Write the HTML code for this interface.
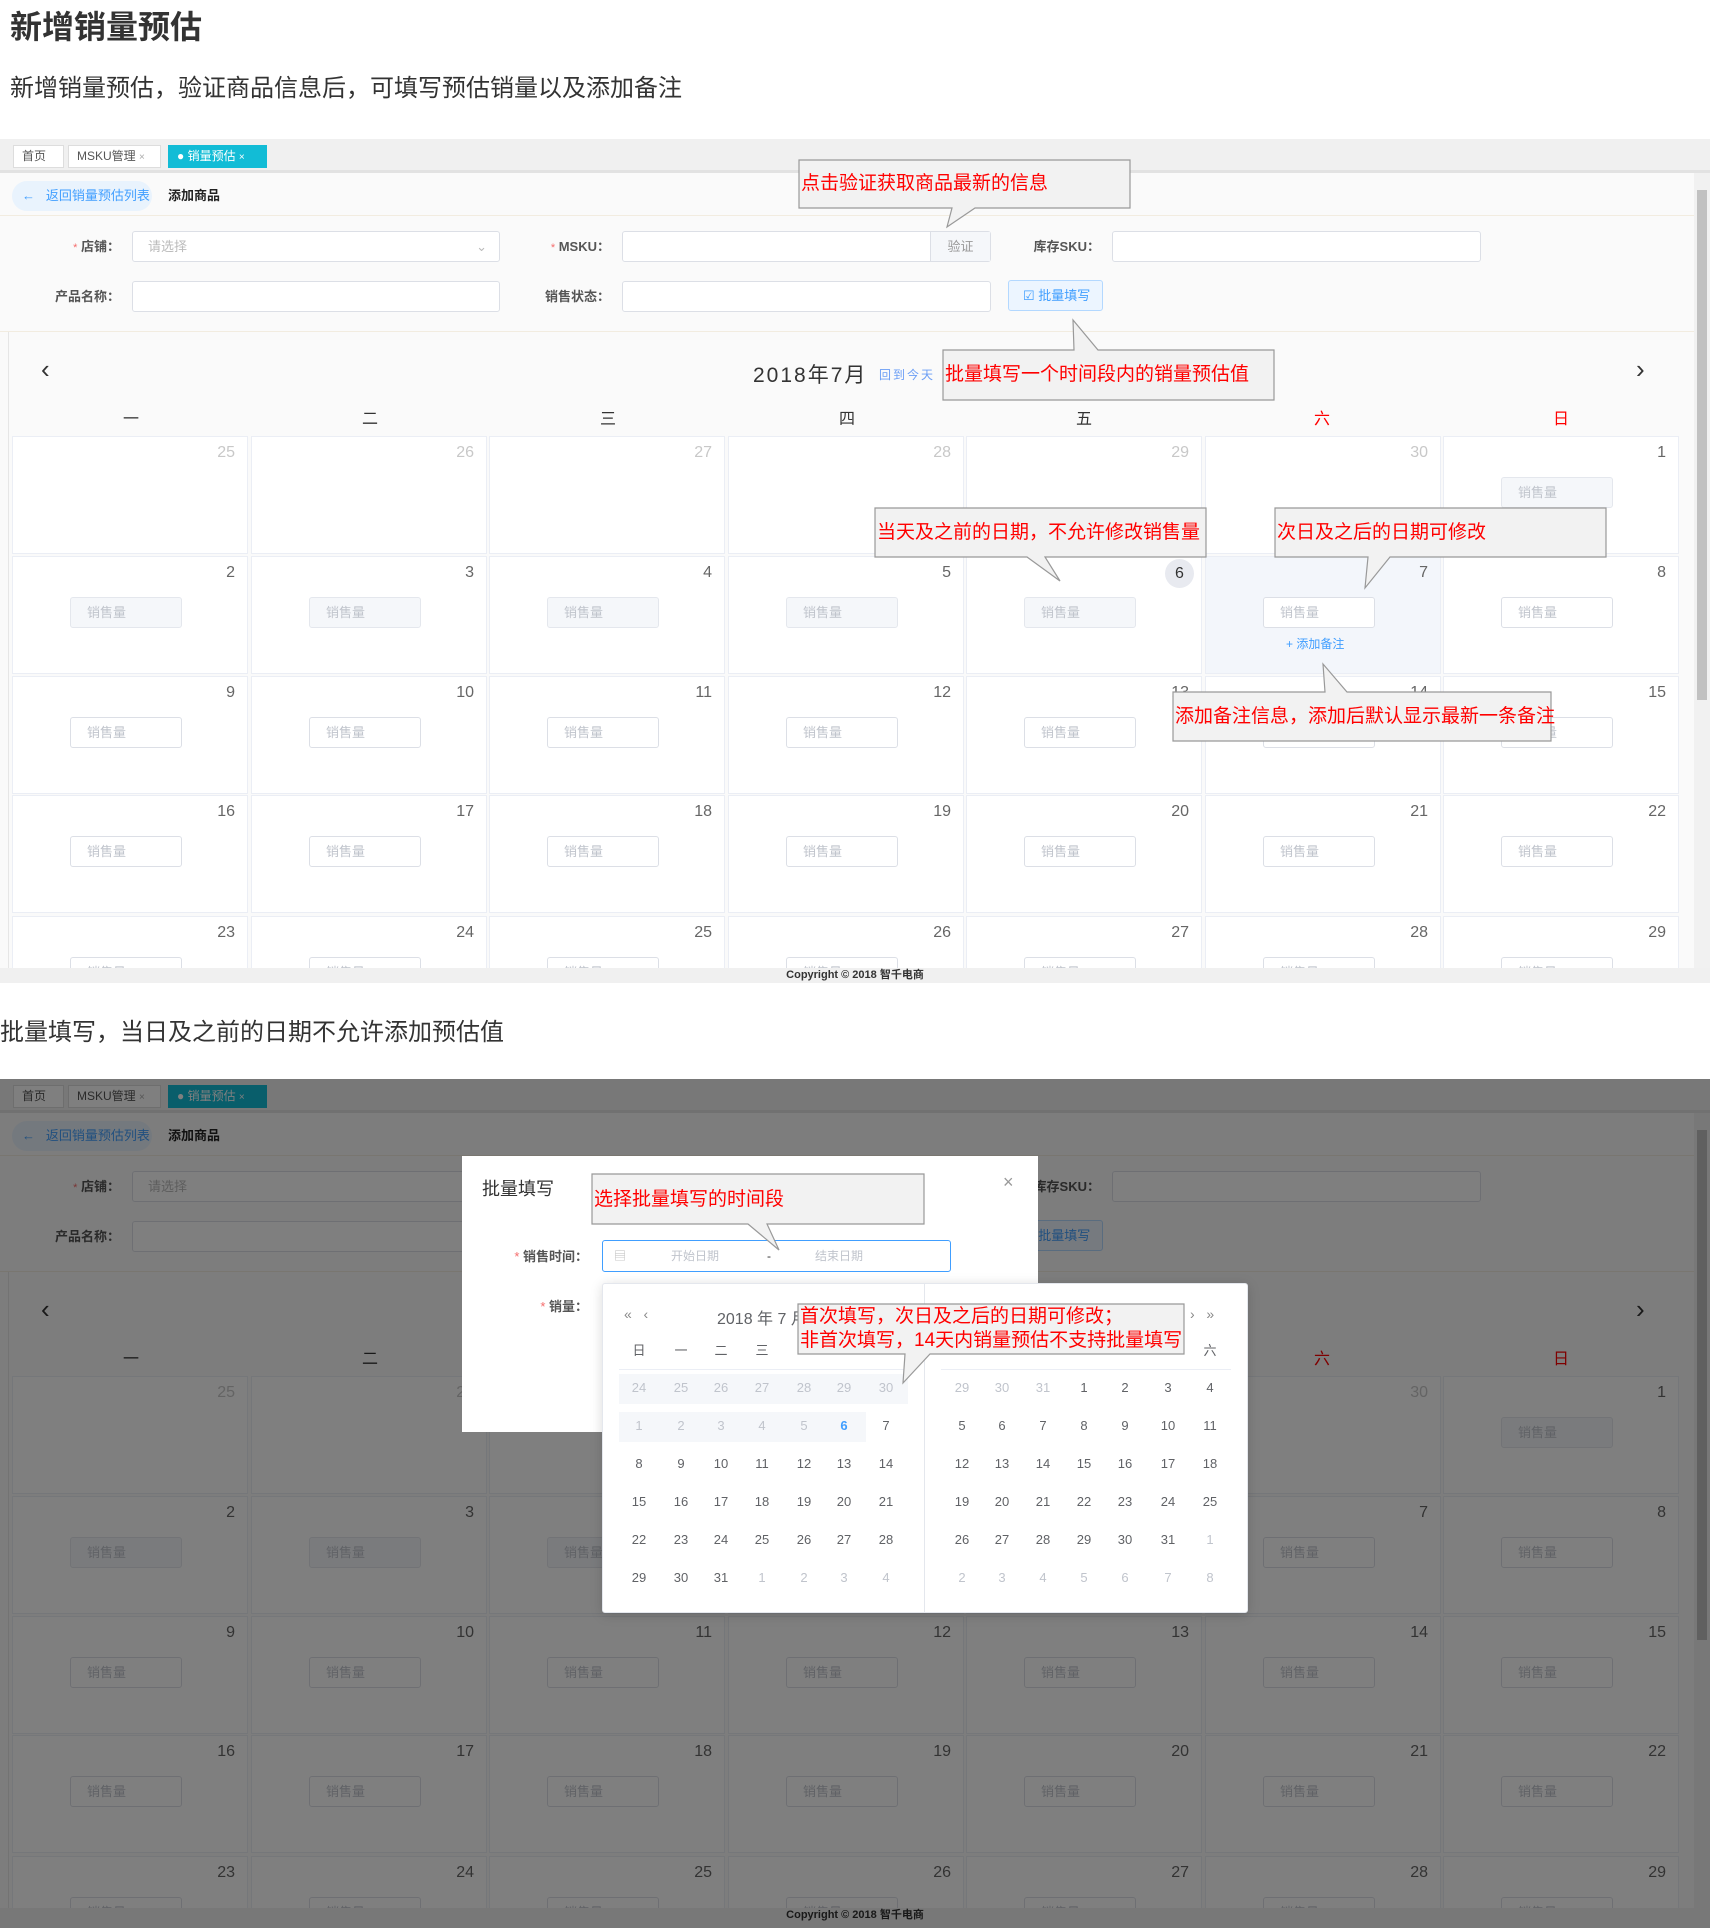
<!DOCTYPE html>
<html><head><meta charset="utf-8"><style>
*{margin:0;padding:0;box-sizing:border-box}
body{width:1710px;height:1928px;position:relative;background:#fff;font-family:"Liberation Sans","Noto Sans CJK SC",sans-serif;overflow:hidden}
.a{position:absolute}
.app{position:absolute;left:0;width:1710px;overflow:hidden;background:#fafafa}
.tabs{position:absolute;left:0;top:0;width:1710px;height:34px;background:#f0f0f0;border-bottom:3px solid #e2e2e2}
.tab{position:absolute;top:6px;height:23px;border:1px solid #ddd;background:#fff;font-size:12px;color:#555;line-height:21px;padding-left:8px}
.bc{position:absolute;top:42px;height:30px;left:12px;width:140px;background:#e9f3fd;border-radius:15px;color:#409eff;font-size:13px;line-height:30px;padding-left:10px}
.form{position:absolute;top:76px;left:0;width:1694px;height:117px;background:#fafafa;border-top:1px solid #f2ece0;border-bottom:1px solid #f2ece0}
.lb{position:absolute;font-size:13px;font-weight:bold;color:#555;text-align:right;width:120px;line-height:31px}
.lb s{color:#f56c6c;text-decoration:none;font-weight:normal;font-size:11px}
.ip{position:absolute;height:31px;background:#fff;border:1px solid #dcdfe6;border-radius:3px;font-size:13px;color:#bbb;line-height:29px;padding-left:15px}
.cal{position:absolute;top:193px;left:8px;width:1678px;height:636px;background:#fafafa;border-left:1px solid #e6e6e6}
.c{position:absolute;width:236px;height:118px;background:#fff;border:1px solid #ebeef5}
.c b{position:absolute;right:12px;top:7px;font-weight:normal;font-size:16px;color:#666}
.c b.g{color:#c8c8c8}
.in{position:absolute;left:57px;top:40px;width:112px;height:31px;border:1px solid #dcdfe6;border-radius:3px;background:#fff;font-style:normal;font-size:13px;color:#c0c4cc;line-height:29px;padding-left:16px}
.in.d{background:#f5f7fa;border-color:#e4e7ed}
.wd{position:absolute;top:73px;font-size:16px;color:#333;width:40px;text-align:center;margin-left:-20px}
.foot{position:absolute;left:0;top:829px;width:1710px;height:15px;background:#f0f0f0;font-size:11px;font-weight:bold;color:#333;text-align:center;line-height:15px}
.sb{position:absolute;left:1694px;top:34px;width:16px;height:795px;background:#f1f1f1}
.sb i{position:absolute;left:3px;top:17px;width:10px;height:510px;background:#c1c1c1}
.ct{position:absolute;color:#f00;font-size:19px;line-height:24px;white-space:nowrap}
.pk{position:absolute;font-size:13px;color:#606266;width:30px;text-align:center;margin-left:-15px}
.pk.g{color:#c0c4cc}
</style></head><body>
<div class="a" style="left:10px;top:2px;font-size:32px;font-weight:bold;color:#333">新增销量预估</div>
<div class="a" style="left:10px;top:68px;font-size:24px;color:#333">新增销量预估，验证商品信息后，可填写预估销量以及添加备注</div>

<div class="app" style="top:139px;height:844px">
<div class="tabs"></div>
<div class="tab" style="left:13px;width:51px">首页</div>
<div class="tab" style="left:68px;width:93px">MSKU管理 <span style="color:#aaa;font-size:10px">×</span></div>
<div class="tab" style="left:168px;width:99px;background:#12bcd6;border-color:#12bcd6;color:#fff">● 销量预估 <span style="font-size:10px">×</span></div>
<div class="bc">←&nbsp;&nbsp; 返回销量预估列表</div>
<div class="a" style="left:168px;top:42px;line-height:30px;font-size:13px;font-weight:bold;color:#222">添加商品</div>
<div class="form">
<div class="lb" style="left:0;top:15px"><s>*</s> 店铺：</div>
<div class="ip" style="left:132px;top:15px;width:368px">请选择<span style="position:absolute;right:12px;color:#bbb">⌄</span></div>
<div class="lb" style="left:490px;top:15px"><s>*</s> MSKU：</div>
<div class="ip" style="left:622px;top:15px;width:369px"><div class="a" style="right:0;top:0;width:60px;height:29px;background:#f5f7fa;border-left:1px solid #dcdfe6;text-align:center;color:#999">验证</div></div>
<div class="lb" style="left:980px;top:15px">库存SKU：</div>
<div class="ip" style="left:1112px;top:15px;width:369px"></div>
<div class="lb" style="left:0;top:65px">产品名称：</div>
<div class="ip" style="left:132px;top:65px;width:368px"></div>
<div class="lb" style="left:490px;top:65px">销售状态：</div>
<div class="ip" style="left:622px;top:65px;width:369px"></div>
<div class="ip" style="left:1008px;top:64px;width:95px;background:#ecf5ff;border-color:#b3d8ff;color:#409eff;padding-left:14px">☑ 批量填写</div>
</div>
<div class="cal">
<div class="a" style="left:32px;top:22px;font-size:26px;color:#333">‹</div>
<div class="a" style="left:1627px;top:22px;font-size:26px;color:#333">›</div>
<div class="a" style="left:744px;top:27px;font-size:21px;color:#333;letter-spacing:2px">2018年7月</div>
<div class="a" style="left:870px;top:34px;font-size:12px;color:#6b9ef5;letter-spacing:2px">回到今天</div>
<div class="wd" style="left:122px">一</div><div class="wd" style="left:361px">二</div><div class="wd" style="left:599px">三</div><div class="wd" style="left:838px">四</div><div class="wd" style="left:1075px">五</div><div class="wd" style="left:1313px;color:#f00">六</div><div class="wd" style="left:1552px;color:#f00">日</div>
</div>
<div class="c" style="left:12px;top:297px"><b class="g">25</b></div>
<div class="c" style="left:251px;top:297px"><b class="g">26</b></div>
<div class="c" style="left:489px;top:297px"><b class="g">27</b></div>
<div class="c" style="left:728px;top:297px"><b class="g">28</b></div>
<div class="c" style="left:966px;top:297px"><b class="g">29</b></div>
<div class="c" style="left:1205px;top:297px"><b class="g">30</b></div>
<div class="c" style="left:1443px;top:297px"><b>1</b><i class="in d">销售量</i></div>
<div class="c" style="left:12px;top:417px"><b>2</b><i class="in d">销售量</i></div>
<div class="c" style="left:251px;top:417px"><b>3</b><i class="in d">销售量</i></div>
<div class="c" style="left:489px;top:417px"><b>4</b><i class="in d">销售量</i></div>
<div class="c" style="left:728px;top:417px"><b>5</b><i class="in d">销售量</i></div>
<div class="c" style="left:966px;top:417px"><b style="right:7px;top:2px;width:29px;height:29px;border-radius:50%;background:#e8eaf0;text-align:center;line-height:29px;color:#333">6</b><i class="in d">销售量</i></div>
<div class="c" style="left:1205px;top:417px;background:#f3f6fb"><b>7</b><i class="in">销售量</i><div class="a" style="left:80px;top:78px;font-size:12px;color:#409eff">+ 添加备注</div></div>
<div class="c" style="left:1443px;top:417px"><b>8</b><i class="in">销售量</i></div>
<div class="c" style="left:12px;top:537px"><b>9</b><i class="in">销售量</i></div>
<div class="c" style="left:251px;top:537px"><b>10</b><i class="in">销售量</i></div>
<div class="c" style="left:489px;top:537px"><b>11</b><i class="in">销售量</i></div>
<div class="c" style="left:728px;top:537px"><b>12</b><i class="in">销售量</i></div>
<div class="c" style="left:966px;top:537px"><b>13</b><i class="in">销售量</i></div>
<div class="c" style="left:1205px;top:537px"><b>14</b><i class="in">销售量</i></div>
<div class="c" style="left:1443px;top:537px"><b>15</b><i class="in">销售量</i></div>
<div class="c" style="left:12px;top:656px"><b>16</b><i class="in">销售量</i></div>
<div class="c" style="left:251px;top:656px"><b>17</b><i class="in">销售量</i></div>
<div class="c" style="left:489px;top:656px"><b>18</b><i class="in">销售量</i></div>
<div class="c" style="left:728px;top:656px"><b>19</b><i class="in">销售量</i></div>
<div class="c" style="left:966px;top:656px"><b>20</b><i class="in">销售量</i></div>
<div class="c" style="left:1205px;top:656px"><b>21</b><i class="in">销售量</i></div>
<div class="c" style="left:1443px;top:656px"><b>22</b><i class="in">销售量</i></div>
<div class="c" style="left:12px;top:777px"><b>23</b><i class="in">销售量</i></div>
<div class="c" style="left:251px;top:777px"><b>24</b><i class="in">销售量</i></div>
<div class="c" style="left:489px;top:777px"><b>25</b><i class="in">销售量</i></div>
<div class="c" style="left:728px;top:777px"><b>26</b><i class="in">销售量</i></div>
<div class="c" style="left:966px;top:777px"><b>27</b><i class="in">销售量</i></div>
<div class="c" style="left:1205px;top:777px"><b>28</b><i class="in">销售量</i></div>
<div class="c" style="left:1443px;top:777px"><b>29</b><i class="in">销售量</i></div>
<div class="a" style="left:0;top:829px;width:1710px;height:15px;background:#f0f0f0"></div>
<div class="sb"><i></i></div>
<div class="foot">Copyright © 2018 智千电商</div>
</div>

<div class="a" style="left:0;top:1012px;font-size:24px;color:#333">批量填写，当日及之前的日期不允许添加预估值</div>

<div class="app" style="top:1079px;height:849px">
<div class="tabs"></div>
<div class="tab" style="left:13px;width:51px">首页</div>
<div class="tab" style="left:68px;width:93px">MSKU管理 <span style="color:#aaa;font-size:10px">×</span></div>
<div class="tab" style="left:168px;width:99px;background:#12bcd6;border-color:#12bcd6;color:#fff">● 销量预估 <span style="font-size:10px">×</span></div>
<div class="bc">←&nbsp;&nbsp; 返回销量预估列表</div>
<div class="a" style="left:168px;top:42px;line-height:30px;font-size:13px;font-weight:bold;color:#222">添加商品</div>
<div class="form">
<div class="lb" style="left:0;top:15px"><s>*</s> 店铺：</div>
<div class="ip" style="left:132px;top:15px;width:368px">请选择</div>
<div class="lb" style="left:490px;top:15px"><s>*</s> MSKU：</div>
<div class="ip" style="left:622px;top:15px;width:369px"></div>
<div class="lb" style="left:980px;top:15px">库存SKU：</div>
<div class="ip" style="left:1112px;top:15px;width:369px"></div>
<div class="lb" style="left:0;top:65px">产品名称：</div>
<div class="ip" style="left:132px;top:65px;width:368px"></div>
<div class="lb" style="left:490px;top:65px">销售状态：</div>
<div class="ip" style="left:622px;top:65px;width:369px"></div>
<div class="ip" style="left:1008px;top:64px;width:95px;background:#ecf5ff;border-color:#b3d8ff;color:#409eff;padding-left:14px">☑ 批量填写</div>
</div>
<div class="cal">
<div class="a" style="left:32px;top:22px;font-size:26px;color:#333">‹</div>
<div class="a" style="left:1627px;top:22px;font-size:26px;color:#333">›</div>
<div class="a" style="left:744px;top:27px;font-size:21px;color:#333;letter-spacing:2px">2018年7月</div>
<div class="wd" style="left:122px">一</div><div class="wd" style="left:361px">二</div><div class="wd" style="left:599px">三</div><div class="wd" style="left:838px">四</div><div class="wd" style="left:1075px">五</div><div class="wd" style="left:1313px;color:#f00">六</div><div class="wd" style="left:1552px;color:#f00">日</div>
</div>
<div class="c" style="left:12px;top:297px"><b class="g">25</b></div>
<div class="c" style="left:251px;top:297px"><b class="g">26</b></div>
<div class="c" style="left:489px;top:297px"><b class="g">27</b></div>
<div class="c" style="left:728px;top:297px"><b class="g">28</b></div>
<div class="c" style="left:966px;top:297px"><b class="g">29</b></div>
<div class="c" style="left:1205px;top:297px"><b class="g">30</b></div>
<div class="c" style="left:1443px;top:297px"><b>1</b><i class="in d">销售量</i></div>
<div class="c" style="left:12px;top:417px"><b>2</b><i class="in d">销售量</i></div>
<div class="c" style="left:251px;top:417px"><b>3</b><i class="in d">销售量</i></div>
<div class="c" style="left:489px;top:417px"><b>4</b><i class="in d">销售量</i></div>
<div class="c" style="left:728px;top:417px"><b>5</b><i class="in d">销售量</i></div>
<div class="c" style="left:966px;top:417px"><b>6</b><i class="in d">销售量</i></div>
<div class="c" style="left:1205px;top:417px"><b>7</b><i class="in">销售量</i></div>
<div class="c" style="left:1443px;top:417px"><b>8</b><i class="in">销售量</i></div>
<div class="c" style="left:12px;top:537px"><b>9</b><i class="in">销售量</i></div>
<div class="c" style="left:251px;top:537px"><b>10</b><i class="in">销售量</i></div>
<div class="c" style="left:489px;top:537px"><b>11</b><i class="in">销售量</i></div>
<div class="c" style="left:728px;top:537px"><b>12</b><i class="in">销售量</i></div>
<div class="c" style="left:966px;top:537px"><b>13</b><i class="in">销售量</i></div>
<div class="c" style="left:1205px;top:537px"><b>14</b><i class="in">销售量</i></div>
<div class="c" style="left:1443px;top:537px"><b>15</b><i class="in">销售量</i></div>
<div class="c" style="left:12px;top:656px"><b>16</b><i class="in">销售量</i></div>
<div class="c" style="left:251px;top:656px"><b>17</b><i class="in">销售量</i></div>
<div class="c" style="left:489px;top:656px"><b>18</b><i class="in">销售量</i></div>
<div class="c" style="left:728px;top:656px"><b>19</b><i class="in">销售量</i></div>
<div class="c" style="left:966px;top:656px"><b>20</b><i class="in">销售量</i></div>
<div class="c" style="left:1205px;top:656px"><b>21</b><i class="in">销售量</i></div>
<div class="c" style="left:1443px;top:656px"><b>22</b><i class="in">销售量</i></div>
<div class="c" style="left:12px;top:777px"><b>23</b><i class="in">销售量</i></div>
<div class="c" style="left:251px;top:777px"><b>24</b><i class="in">销售量</i></div>
<div class="c" style="left:489px;top:777px"><b>25</b><i class="in">销售量</i></div>
<div class="c" style="left:728px;top:777px"><b>26</b><i class="in">销售量</i></div>
<div class="c" style="left:966px;top:777px"><b>27</b><i class="in">销售量</i></div>
<div class="c" style="left:1205px;top:777px"><b>28</b><i class="in">销售量</i></div>
<div class="c" style="left:1443px;top:777px"><b>29</b><i class="in">销售量</i></div>
<div class="sb" style="height:800px"><i></i></div>
<div class="foot" style="height:20px">Copyright © 2018 智千电商</div>
<div class="a" style="left:0;top:0;width:1710px;height:849px;background:rgba(0,0,0,0.5)"></div>
</div>

<!-- modal -->
<div class="a" style="left:462px;top:1156px;width:576px;height:276px;background:#fff"></div>
<div class="a" style="left:482px;top:1175px;font-size:18px;color:#333">批量填写</div>
<div class="a" style="left:1003px;top:1172px;font-size:18px;color:#999">×</div>
<div class="a" style="left:470px;top:1246px;width:118px;text-align:right;font-size:13px;font-weight:bold;color:#555"><span style="color:#f56c6c;font-weight:normal">*</span> 销售时间：</div>
<div class="a" style="left:470px;top:1296px;width:118px;text-align:right;font-size:13px;font-weight:bold;color:#555"><span style="color:#f56c6c;font-weight:normal">*</span> 销量：</div>
<div class="a" style="left:602px;top:1240px;width:349px;height:32px;border:1px solid #409eff;border-radius:3px;background:#fff;font-size:12px;color:#c0c4cc;line-height:30px">
<span class="a" style="left:11px;top:0;color:#bbb">▤</span><span class="a" style="left:68px">开始日期</span><span class="a" style="left:164px;color:#333">-</span><span class="a" style="left:212px">结束日期</span></div>
<div class="a" style="left:602px;top:1283px;width:646px;height:330px;background:#fff;border:1px solid #e4e7ed;border-radius:3px;box-shadow:0 2px 12px rgba(0,0,0,.15)"></div>
<div class="a" style="left:924px;top:1284px;width:1px;height:328px;background:#e4e7ed"></div>
<div class="a" style="left:619px;top:1369px;width:289px;height:1px;background:#ebeef5"></div>
<div class="a" style="left:941px;top:1369px;width:290px;height:1px;background:#ebeef5"></div>
<div class="a" style="left:619px;top:1374px;width:289px;height:30px;background:#f5f7fa"></div>
<div class="a" style="left:619px;top:1412px;width:247px;height:30px;background:#f5f7fa"></div>
<div class="a" style="left:624px;top:1306px;font-size:14px;color:#888">«&nbsp;&nbsp; ‹</div>
<div class="a" style="left:717px;top:1305px;font-size:16px;color:#606266">2018 年 7 月</div>
<div class="a" style="left:1190px;top:1306px;font-size:14px;color:#888">›&nbsp;&nbsp; »</div>
<div class="a" style="left:0;top:1340px;width:1710px;height:20px">
<span class="pk" style="left:639px">日</span><span class="pk" style="left:681px">一</span><span class="pk" style="left:721px">二</span><span class="pk" style="left:762px">三</span><span class="pk" style="left:1210px">六</span></div>
<div class="a" style="left:0;top:1380px;width:1710px;height:20px"><span class="pk g" style="left:639px">24</span><span class="pk g" style="left:681px">25</span><span class="pk g" style="left:721px">26</span><span class="pk g" style="left:762px">27</span><span class="pk g" style="left:804px">28</span><span class="pk g" style="left:844px">29</span><span class="pk g" style="left:886px">30</span><span class="pk g" style="left:962px">29</span><span class="pk g" style="left:1002px">30</span><span class="pk g" style="left:1043px">31</span><span class="pk" style="left:1084px">1</span><span class="pk" style="left:1125px">2</span><span class="pk" style="left:1168px">3</span><span class="pk" style="left:1210px">4</span></div>
<div class="a" style="left:0;top:1418px;width:1710px;height:20px"><span class="pk g" style="left:639px">1</span><span class="pk g" style="left:681px">2</span><span class="pk g" style="left:721px">3</span><span class="pk g" style="left:762px">4</span><span class="pk g" style="left:804px">5</span><span class="pk" style="left:844px;color:#409eff;font-weight:bold">6</span><span class="pk" style="left:886px">7</span><span class="pk" style="left:962px">5</span><span class="pk" style="left:1002px">6</span><span class="pk" style="left:1043px">7</span><span class="pk" style="left:1084px">8</span><span class="pk" style="left:1125px">9</span><span class="pk" style="left:1168px">10</span><span class="pk" style="left:1210px">11</span></div>
<div class="a" style="left:0;top:1456px;width:1710px;height:20px"><span class="pk" style="left:639px">8</span><span class="pk" style="left:681px">9</span><span class="pk" style="left:721px">10</span><span class="pk" style="left:762px">11</span><span class="pk" style="left:804px">12</span><span class="pk" style="left:844px">13</span><span class="pk" style="left:886px">14</span><span class="pk" style="left:962px">12</span><span class="pk" style="left:1002px">13</span><span class="pk" style="left:1043px">14</span><span class="pk" style="left:1084px">15</span><span class="pk" style="left:1125px">16</span><span class="pk" style="left:1168px">17</span><span class="pk" style="left:1210px">18</span></div>
<div class="a" style="left:0;top:1494px;width:1710px;height:20px"><span class="pk" style="left:639px">15</span><span class="pk" style="left:681px">16</span><span class="pk" style="left:721px">17</span><span class="pk" style="left:762px">18</span><span class="pk" style="left:804px">19</span><span class="pk" style="left:844px">20</span><span class="pk" style="left:886px">21</span><span class="pk" style="left:962px">19</span><span class="pk" style="left:1002px">20</span><span class="pk" style="left:1043px">21</span><span class="pk" style="left:1084px">22</span><span class="pk" style="left:1125px">23</span><span class="pk" style="left:1168px">24</span><span class="pk" style="left:1210px">25</span></div>
<div class="a" style="left:0;top:1532px;width:1710px;height:20px"><span class="pk" style="left:639px">22</span><span class="pk" style="left:681px">23</span><span class="pk" style="left:721px">24</span><span class="pk" style="left:762px">25</span><span class="pk" style="left:804px">26</span><span class="pk" style="left:844px">27</span><span class="pk" style="left:886px">28</span><span class="pk" style="left:962px">26</span><span class="pk" style="left:1002px">27</span><span class="pk" style="left:1043px">28</span><span class="pk" style="left:1084px">29</span><span class="pk" style="left:1125px">30</span><span class="pk" style="left:1168px">31</span><span class="pk g" style="left:1210px">1</span></div>
<div class="a" style="left:0;top:1570px;width:1710px;height:20px"><span class="pk" style="left:639px">29</span><span class="pk" style="left:681px">30</span><span class="pk" style="left:721px">31</span><span class="pk g" style="left:762px">1</span><span class="pk g" style="left:804px">2</span><span class="pk g" style="left:844px">3</span><span class="pk g" style="left:886px">4</span><span class="pk g" style="left:962px">2</span><span class="pk g" style="left:1002px">3</span><span class="pk g" style="left:1043px">4</span><span class="pk g" style="left:1084px">5</span><span class="pk g" style="left:1125px">6</span><span class="pk g" style="left:1168px">7</span><span class="pk g" style="left:1210px">8</span></div>

<svg class="a" style="left:0;top:0" width="1710" height="1928">
<g fill="#f2f2f2" stroke="#999" stroke-width="1.2">
<path d="M799 160H1130V208H975L947 227L952 208H799Z"/>
<path d="M943 350H1074L1073 320L1098 350H1274V400H943Z"/>
<path d="M875 508H1206V557H1045L1060 581L1027 557H875Z"/>
<path d="M1275 508H1606V557H1390L1365 588L1368 557H1275Z"/>
<path d="M1173 692H1325L1323 664L1347 692H1551V741H1173Z"/>
<path d="M592 1174H924V1224H767L779 1250L748 1224H592Z"/>
<path d="M798 1304H1184V1354H930L903 1383L905 1354H798Z"/>
</g></svg>
<div class="ct" style="left:801px;top:172px">点击验证获取商品最新的信息</div>
<div class="ct" style="left:945px;top:363px">批量填写一个时间段内的销量预估值</div>
<div class="ct" style="left:877px;top:521px">当天及之前的日期，不允许修改销售量</div>
<div class="ct" style="left:1277px;top:521px">次日及之后的日期可修改</div>
<div class="ct" style="left:1175px;top:705px">添加备注信息，添加后默认显示最新一条备注</div>
<div class="ct" style="left:594px;top:1188px">选择批量填写的时间段</div>
<div class="ct" style="left:800px;top:1305px">首次填写，次日及之后的日期可修改；<br>非首次填写，14天内销量预估不支持批量填写</div>
</body></html>
